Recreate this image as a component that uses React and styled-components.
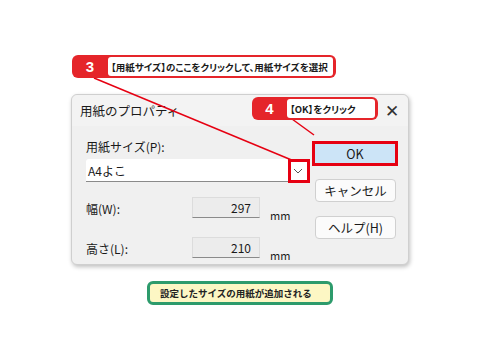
import React from 'react';
import styled, { createGlobalStyle } from 'styled-components';

const Global = createGlobalStyle`
  body {
    margin: 0;
    background: #fff;
    font-family: "Noto Sans CJK JP", "Noto Sans", sans-serif;
  }
`;

const Page = styled.div`
  position: relative;
  width: 480px;
  height: 360px;
  overflow: hidden;
  background: #fff;
  padding: 94px 0 0 71px;
  box-sizing: border-box;
`;

const Dialog = styled.div`
  width: 338px;
  height: 171px;
  box-sizing: border-box;
  background: #f0f0f0;
  border: 1px solid #cfcfcf;
  border-radius: 6px;
  box-shadow: 1px 2px 4px rgba(0, 0, 0, 0.25);
  display: flex;
  flex-direction: column;
  color: #1a1a1a;
  font-size: 12px;
`;

const TitleBar = styled.div`
  flex-shrink: 0;
  height: 31px;
  display: flex;
  align-items: center;
  justify-content: space-between;
  padding: 0 8px 0 8px;
  background: #f3f3f3;
  border-radius: 6px 6px 0 0;
  font-size: 12.5px;
`;

const Close = styled.span`
  font-size: 17px;
  font-family: "DejaVu Sans", sans-serif;
  font-weight: 300;
  color: #333;
  margin-right: 1px;
`;

const Body = styled.div`
  flex: 1;
  display: flex;
  padding: 8px 12px 0 14px;
  gap: 3px;
`;

const Left = styled.div`
  flex: 1;
  display: flex;
  flex-direction: column;
`;

const Label = styled.div`
  font-size: 12px;
  line-height: 14px;
  margin-top: ${p => p.top || 0}px;
`;

const Select = styled.div`
  position: relative;
  margin-top: 5px;
  height: 23px;
  box-sizing: border-box;
  background: #fff;
  border-bottom: 1px solid #8a8a8a;
  border-radius: 3px 3px 0 0;
  display: flex;
  align-items: center;
  padding-left: 2px;
  font-size: 12px;
`;

const Chevron = styled.svg`
  position: absolute;
  right: 6px;
  top: 9px;
`;

const Highlight = styled.div`
  position: absolute;
  right: -1px;
  top: 0;
  width: 22px;
  height: 24px;
  border: 3px solid #e60012;
  box-sizing: border-box;
`;

const FieldRow = styled.div`
  display: flex;
  height: 21px;
  margin-top: ${p => p.top}px;
`;

const FieldLabel = styled.div`
  width: 106px;
  padding-top: 3px;
  font-size: 12px;
`;

const Num = styled.div`
  width: 68px;
  height: 21px;
  box-sizing: border-box;
  background: #ececec;
  border: 1px solid #dcdcdc;
  border-bottom: 1px solid #8a8a8a;
  text-align: right;
  padding: 1px 8px 0 0;
  font-size: 12px;
`;

const Unit = styled.div`
  align-self: flex-end;
  line-height: 1;
  margin: 0 0 -3px 10px;
  font-size: 11px;
`;

const Right = styled.div`
  width: 84px;
  display: flex;
  flex-direction: column;
  align-items: flex-start;
  padding-top: 7px;
`;

const Button = styled.div`
  width: 81px;
  height: 23px;
  box-sizing: border-box;
  display: flex;
  align-items: center;
  justify-content: center;
  background: ${p => (p.primary ? '#cce4f7' : '#fbfbfb')};
  border: 1px solid ${p => (p.primary ? '#0067c0' : '#d0d0d0')};
  border-radius: 4px;
  font-size: 12.5px;
  margin-top: ${p => p.top || 0}px;
  margin-left: 3px;
`;

const OkFrame = styled.div`
  width: 86px;
  height: 25px;
  box-sizing: border-box;
  border: 3px solid #e60012;
  display: flex;
  align-items: center;
  justify-content: center;
  & > div {
    margin: 0;
    width: 80px;
    height: 19px;
    border: none;
    border-radius: 0;
  }
`;

const Callout = styled.div`
  position: absolute;
  left: ${p => p.x}px;
  top: ${p => p.y}px;
  width: ${p => p.w}px;
  height: 23px;
  box-sizing: border-box;
  background: #e5252a;
  border-radius: 6px;
  display: flex;
  align-items: center;
  padding: 2px 3px 2px 0;
`;

const Step = styled.span`
  flex-shrink: 0;
  width: ${p => p.w}px;
  text-align: center;
  color: #fff;
  font-family: "Liberation Sans", sans-serif;
  font-weight: 700;
  font-size: 15px;
`;

const CalloutText = styled.div`
  flex: 1;
  min-width: 0;
  height: 100%;
  background: #fff;
  border-radius: 3px;
  display: flex;
  align-items: center;
  padding-left: 3px;
  font-size: 9.5px;
  font-weight: 700;
  font-feature-settings: "palt";
  color: #1a1a1a;
  white-space: nowrap;
`;

const Lines = styled.svg`
  position: absolute;
  left: 0;
  top: 0;
  pointer-events: none;
`;

const Note = styled.div`
  width: 186px;
  height: 24px;
  box-sizing: border-box;
  margin: 16px 0 0 76px;
  background: #fdf7c4;
  border: 3px solid #2d9b6c;
  border-radius: 6px;
  display: flex;
  align-items: center;
  padding-left: 10px;
  font-size: 9.5px;
  font-weight: 700;
  color: #222;
`;

export default function App() {
  return (
    <>
      <Global />
      <Page>
        <Dialog>
          <TitleBar>
            <span>用紙のプロパティ</span>
            <Close>✕</Close>
          </TitleBar>
          <Body>
            <Left>
              <Label top={6}>用紙サイズ(P):</Label>
              <Select>
                A4よこ
                <Chevron width="10" height="6" viewBox="0 0 10 6">
                  <path d="M1 1l4 4 4-4" fill="none" stroke="#555" strokeWidth="1" />
                </Chevron>
                <Highlight />
              </Select>
              <FieldRow top={15}>
                <FieldLabel>幅(W):</FieldLabel>
                <Num>297</Num>
                <Unit>mm</Unit>
              </FieldRow>
              <FieldRow top={19}>
                <FieldLabel>高さ(L):</FieldLabel>
                <Num>210</Num>
                <Unit>mm</Unit>
              </FieldRow>
            </Left>
            <Right>
              <OkFrame>
                <Button primary>OK</Button>
              </OkFrame>
              <Button top={13}>キャンセル</Button>
              <Button top={14}>ヘルプ(H)</Button>
            </Right>
          </Body>
        </Dialog>
        <Note>設定したサイズの用紙が追加される</Note>

        <Lines width="480" height="360">
          <line x1="94" y1="78" x2="294" y2="161" stroke="#e60012" strokeWidth="1.5" />
          <line x1="292" y1="119" x2="314" y2="135" stroke="#e60012" strokeWidth="1.5" />
        </Lines>
        <Callout x={72} y={55} w={264}>
          <Step w={36}>3</Step>
          <CalloutText>【用紙サイズ】のここをクリックして、用紙サイズを選択</CalloutText>
        </Callout>
        <Callout x={252} y={97} w={126}>
          <Step w={35}>4</Step>
          <CalloutText>【OK】をクリック</CalloutText>
        </Callout>
      </Page>
    </>
  );
}
